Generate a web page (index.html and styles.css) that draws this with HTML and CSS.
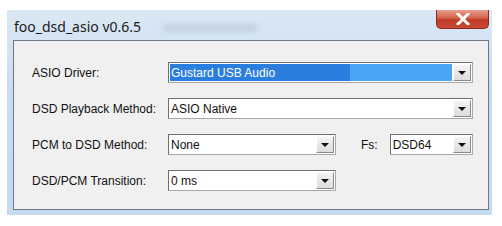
FILE: index.html
```html
<!DOCTYPE html>
<html lang="en">
<head>
    <meta charset="UTF-8">
    <title>foo_dsd_asio v0.6.5</title>
    <link rel="stylesheet" href="styles.css">
</head>
<body>
    <!-- Dialog window -->
    <div class="window">
        <div class="titlebar">
            <span class="title">foo_dsd_asio v0.6.5</span>
            <span class="title-smudge"></span>
            <button class="close-btn">
                <svg width="14" height="12" viewBox="0 0 14 12">
                    <path d="M2 1 L12 11 M12 1 L2 11" stroke="#fff" stroke-width="3" stroke-linecap="square"/>
                </svg>
            </button>
        </div>

        <div class="panel">
            <div class="row">
                <label>ASIO Driver:</label>
                <div class="combo wide selected">
                    <span class="value">Gustard USB Audio</span>
                    <span class="arrow"></span>
                </div>
            </div>
            <div class="row">
                <label>DSD Playback Method:</label>
                <div class="combo wide">
                    <span class="value">ASIO Native</span>
                    <span class="arrow"></span>
                </div>
            </div>
            <div class="row">
                <label>PCM to DSD Method:</label>
                <div class="combo short">
                    <span class="value">None</span>
                    <span class="arrow"></span>
                </div>
                <label class="fs-label">Fs:</label>
                <div class="combo tiny">
                    <span class="value">DSD64</span>
                    <span class="arrow"></span>
                </div>
            </div>
            <div class="row">
                <label>DSD/PCM Transition:</label>
                <div class="combo short">
                    <span class="value">0 ms</span>
                    <span class="arrow"></span>
                </div>
            </div>
        </div>
    </div>
</body>
</html>
```

FILE: styles.css
```css
body {
    margin: 0;
    padding: 0;
    background: #ffffff;
    font-family: "Liberation Sans", Arial, sans-serif;
}

/* Window frame */
.window {
    margin: 10px 0 0 7px;
    width: 485px;
    height: 205px;
    box-sizing: border-box;
    padding: 0 3px 5px 6px;
    background: linear-gradient(to bottom, #dbe8f5 0%, #c9ddf1 40%, #c4daf0 100%);
    display: flex;
    flex-direction: column;
}

.titlebar {
    height: 30px;
    display: flex;
    align-items: flex-start;
    position: relative;
}

.title {
    font-family: "Noto Sans", "Open Sans", sans-serif;
    font-size: 14px;
    color: #1a1a1a;
    margin: 8px 0 0 1px;
    line-height: 17px;
}

.title-smudge {
    position: absolute;
    left: 150px;
    top: 15px;
    width: 95px;
    height: 6px;
    background: #9fb0c0;
    border-radius: 3px;
    filter: blur(3px);
    opacity: 0.5;
}

.close-btn {
    margin-left: auto;
    width: 53px;
    height: 19px;
    border: 1px solid #8a2a20;
    border-top: none;
    border-radius: 0 0 5px 5px;
    background: linear-gradient(to bottom, #e8a08e 0%, #d2604a 45%, #c03a26 55%, #c84a34 100%);
    display: flex;
    align-items: center;
    justify-content: center;
    padding: 0;
}

/* Client area */
.panel {
    flex: 1;
    background: #f0f0f0;
    border: 1px solid #6d7a86;
    padding: 21px 0 0 18px;
    display: flex;
    flex-direction: column;
    gap: 15px;
}

.row {
    display: flex;
    align-items: center;
    height: 21px;
}

.row label {
    width: 136px;
    font-size: 12px;
    color: #111;
}

.row .fs-label {
    width: auto;
    margin: 0 12px 0 25px;
}

/* Combo boxes */
.combo {
    height: 21px;
    box-sizing: border-box;
    background: #fff;
    border: 1px solid #a8a8a8;
    border-top-color: #6f6f6f;
    border-left-color: #6f6f6f;
    display: flex;
    align-items: center;
    font-size: 12px;
    color: #111;
}

.combo.wide { width: 305px; }
.combo.short { width: 168px; }
.combo.tiny { width: 83px; }

.combo .value {
    flex: 1;
    padding-left: 2px;
    height: 100%;
    display: flex;
    align-items: center;
}

.combo.selected .value {
    color: #fff;
    margin: 1px 0 1px 1px;
    height: 17px;
    padding-left: 1px;
    background: linear-gradient(to right, #2a7ede 0%, #2a7ede 64%, #4ba4f4 64%, #4ba4f4 100%);
}

.combo .arrow {
    width: 18px;
    height: 17px;
    margin: 1px;
    box-sizing: border-box;
    border: 1px solid #fff;
    border-right-color: #8a8a8a;
    border-bottom-color: #8a8a8a;
    background: linear-gradient(to bottom, #f4f4f4, #dcdcdc);
    position: relative;
}

.combo .arrow::after {
    content: "";
    position: absolute;
    left: 4px;
    top: 6px;
    border-left: 4px solid transparent;
    border-right: 4px solid transparent;
    border-top: 4px solid #111;
}
```
